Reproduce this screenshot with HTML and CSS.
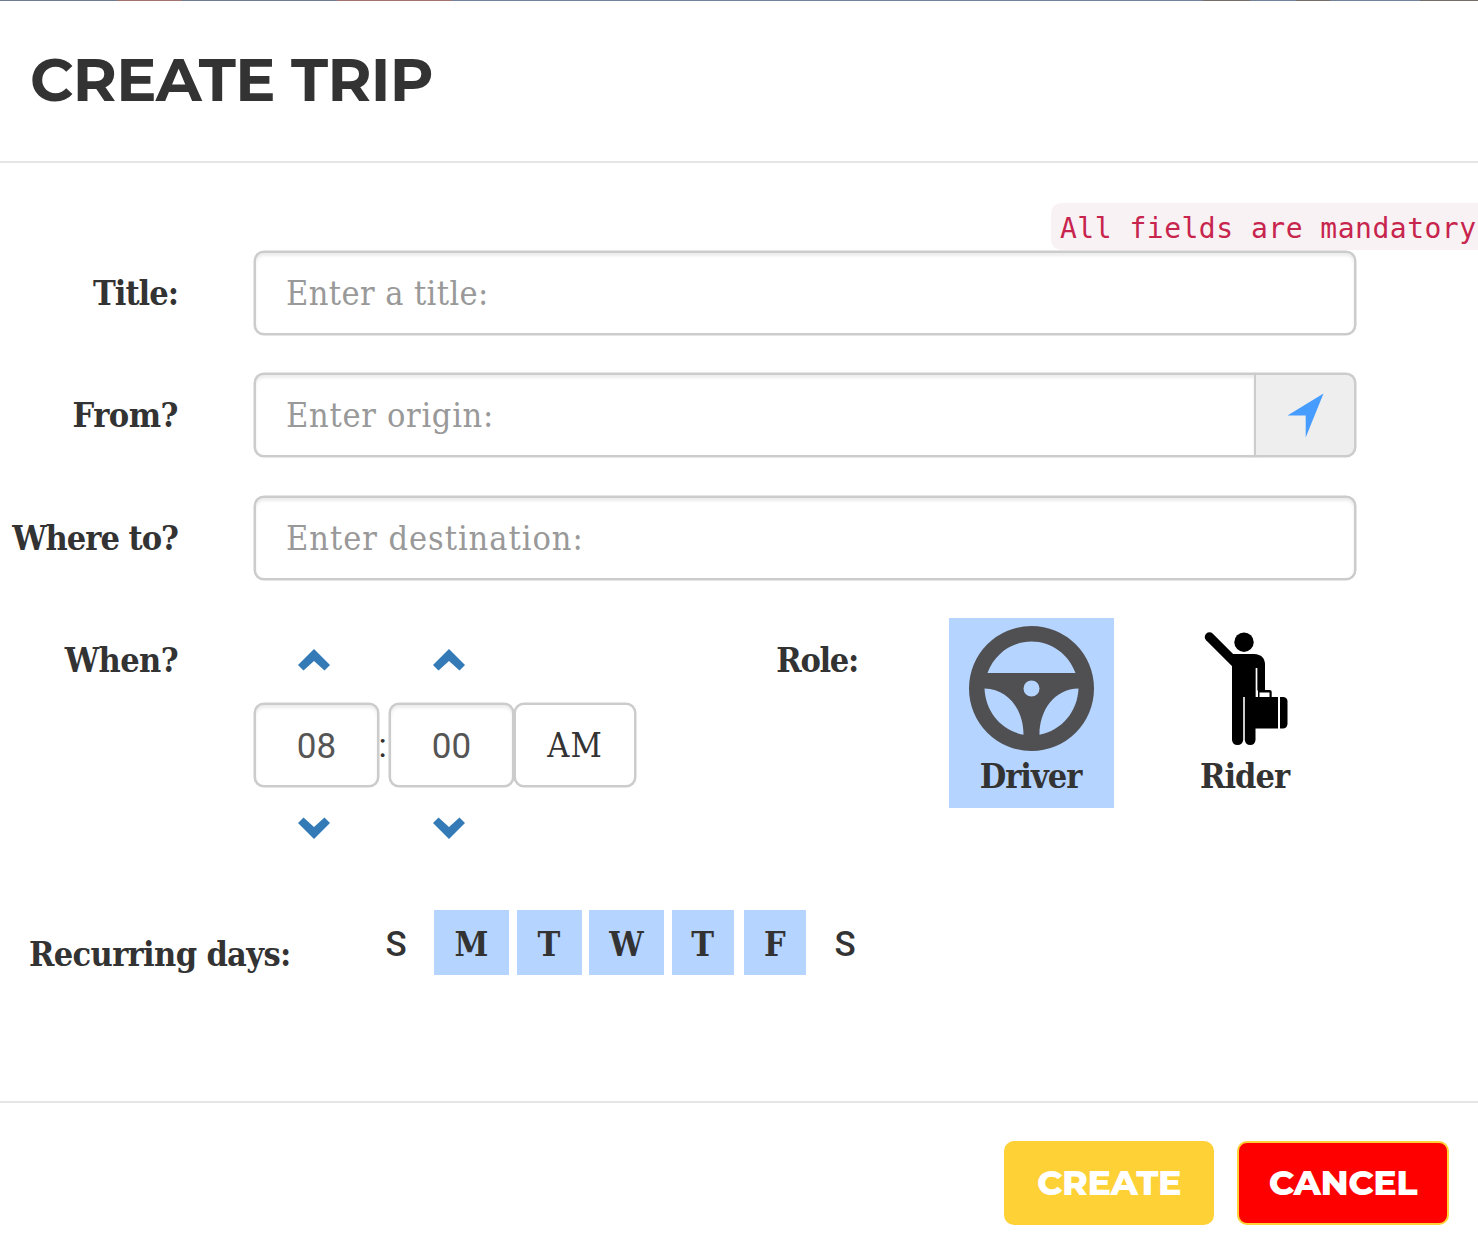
FILE: index.html
```html
<!DOCTYPE html>
<html lang="en">
<head>
<meta charset="utf-8">
<title>Create Trip</title>
<link rel="stylesheet" href="styles.css">
</head>
<body>
<div class="modal">
  <header class="modal-header"><h1 class="modal-title">CREATE TRIP</h1></header>
  <main class="modal-body">
    <div class="notice"><code class="notice-text">All fields are mandatory</code></div>
    <div class="row"><label class="label label-title">Title:</label><div class="input"><span class="ph-title">Enter a title:</span></div></div>
    <div class="row"><label class="label label-from">From?</label><div class="group"><div class="input input-joined"><span class="ph-origin">Enter origin:</span></div><button class="addon" aria-label="Use my location"><svg width="37" height="45" viewBox="0 0 37 45"><path d="M36.5 0.5L18.7 44.5V22.5H0.5Z" fill="#469cff"/></svg></button></div></div>
    <div class="row"><label class="label label-to">Where to?</label><div class="input"><span class="ph-dest">Enter destination:</span></div></div>
    <div class="row row-when">
      <label class="label label-when">When?</label>
      <div class="time">
        <svg class="chev" viewBox="0 0 32 22"><path d="M16 0L32 16L26.5 21.5L16 12L5.5 21.5L0 16Z"/></svg>
        <span></span>
        <svg class="chev" viewBox="0 0 32 22"><path d="M16 0L32 16L26.5 21.5L16 12L5.5 21.5L0 16Z"/></svg>
        <span></span>
        <div class="input time-input">08</div>
        <span class="colon">:</span>
        <div class="input time-input">00</div>
        <button class="ampm">AM</button>
        <svg class="chev" viewBox="0 0 32 22"><path d="M16 22L32 6L26.5 .5L16 10L5.5 .5L0 6Z"/></svg>
        <span></span>
        <svg class="chev" viewBox="0 0 32 22"><path d="M16 22L32 6L26.5 .5L16 10L5.5 .5L0 6Z"/></svg>
      </div>
      <label class="label label-role">Role:</label>
      <div class="role role-active">
        <svg width="125" height="125" viewBox="0 0 125 125"><path fill="#505052" fill-rule="evenodd" d="M62.5 0a62.5 62.5 0 1 1 0 125a62.5 62.5 0 1 1 0-125ZM18.5 47H106.5C99.500 28 82.500 15.500 62.500 15.500S25.500 28 18.500 47ZM62.500 54.500a8 8 0 1 0 0 16a8 8 0 1 0 0-16ZM15.500 62.500C16.500 86 32.500 104.500 54.500 108.700C54.500 84 39.500 63 15.500 62.500ZM109.500 62.500C108.500 86 92.500 104.500 70.500 108.700C70.500 84 85.500 63 109.500 62.500Z"/></svg>
        <span class="role-name">Driver</span>
      </div>
      <div class="role">
        <svg width="125" height="125" viewBox="0 0 125 125">
          <g transform="translate(21.500 6)">
            <circle cx="39.500" cy="10.200" r="9.700"/>
            <path d="M5 5L30 30" stroke="#000" stroke-width="9.500" stroke-linecap="round"/>
            <path d="M26.500 22H49.500Q60.500 22.500 60.500 33V58H65Q67.200 58 67.200 60V65H73.500V96.500H51V108Q50.500 113 45.700 113T40.300 108V65H38.700V108Q38 113 33 113T27.500 108V30Z"/>
            <path d="M75.500 65H79Q83 65.500 83 69.500V92Q82.500 96 79 96.500H75.500Z"/>
            <path d="M52 36V65" stroke="#fff" stroke-width="1.700"/>
            <rect x="55" y="60.500" width="10" height="4.500" fill="#fff"/>
            <path d="M53 65V58.500" stroke="#fff" stroke-width="1"/>
          </g>
        </svg>
        <span class="role-name">Rider</span>
      </div>
    </div>
    <div class="days-row">
      <label class="days-label">Recurring days:</label>
      <div class="days"><span class="day sans">S</span><span class="day on">M</span><span class="day on">T</span><span class="day on">W</span><span class="day on">T</span><span class="day on">F</span><span class="day sans">S</span></div>
    </div>
  </main>
  <footer class="modal-footer"><button class="btn btn-create">CREATE</button><button class="btn btn-cancel">CANCEL</button></footer>
</div>
</body>
</html>
```
FILE: styles.css
```css
* { box-sizing: border-box; }
html { background: #fff; }
body { margin: 0; overflow: hidden; color: #333; font: 34px/50px "Roboto Slab", "DejaVu Serif Condensed", "DejaVu Serif", serif; white-space: nowrap; }
button { padding: 0; font: inherit; color: inherit; }
svg { display: block; flex: none; }
.modal { width: 1478px; height: 1258px; padding-top: 1px; display: flex; flex-direction: column; overflow: hidden; background: linear-gradient(90deg, #6f7b90 117px, #a27370 117px 182px, #6f7b90 182px 337px, #a27370 337px 452px, #74819a 452px 1203px, #746e6a 1203px 1250px, #74819a 1250px 1296px, #746e6a 1296px 1330px, #74819a 1330px 1420px, #746e6a 1420px) 0 0 / 100% 1px no-repeat; }
.modal-header { flex: none; height: 162px; padding: 44px 0 0 30px; border-bottom: 2px solid #e5e5e5; }
.modal-title { margin: 0; font: 700 60px/70px Montserrat, Lato, sans-serif; letter-spacing: -.7px; }
.modal-body { flex: none; height: 938px; padding-top: 40px; display: flex; flex-direction: column; }
.notice { height: 47px; margin-bottom: 1px; display: flex; padding-left: 1051px; }
.notice-text { flex: 1; padding-left: 9px; border-radius: 10px 0 0 10px; background: #f9f2f4; color: #c7254e; font: 28px/51px Consolas, "DejaVu Sans Mono", monospace; letter-spacing: .5px; }
.row { display: grid; grid-template-columns: 178px 1102px; column-gap: 76px; height: 84px; margin-bottom: 38.4px; }
.label { font-weight: 700; line-height: 84px; text-align: right; letter-spacing: -1px; }
.label-from { letter-spacing: -.5px; }
.label-when { letter-spacing: -.6px; }
.label-role { letter-spacing: -1.3px; }
.ph-title { letter-spacing: .4px; }
.ph-origin { letter-spacing: .7px; }
.ph-dest { letter-spacing: .95px; }
.input { height: 84px; border: 2px solid #ccc; border-radius: 10px; background: #fff; box-shadow: inset 0 3px 3px rgba(0,0,0,.075), 0 0 0 .5px #ccc; padding-left: 30px; line-height: 80px; color: #999; }
.group { display: flex; }
.input-joined { width: 1002px; border-radius: 10px 0 0 10px; }
.addon { width: 100px; border: 2px solid #ccc; border-left: 0; border-radius: 0 10px 10px 0; background: #eee; box-shadow: 0 0 0 .5px #ccc; display: flex; align-items: center; justify-content: center; }
.row-when { height: 221px; margin: 0; grid-template-columns: 178px 458px 222px 256px 210px; column-gap: 0; }
.time { margin-left: 76px; width: 382px; display: grid; grid-template-columns: 125px 10px 125px 122px; grid-template-rows: 84px 85px 83px; align-items: center; }
.chev { width: 32px; height: 22px; margin: 0 0 1px 44px; fill: #337ab7; }
.time-input { padding: 2px 0 0; text-align: center; color: #555; font-family: Roboto, sans-serif; font-size: 35px; }
.colon { margin-left: -3px; text-align: center; font-family: Roboto, sans-serif; }
.ampm { height: 84px; border: 2px solid #ccc; border-radius: 10px; background: #fff; box-shadow: 0 0 0 .5px #ccc; letter-spacing: 1px; }
.role { margin-left: 91px; width: 165px; height: 190px; padding-top: 8px; display: flex; flex-direction: column; align-items: center; font-weight: 700; }
.role + .role { margin-left: 49px; }
.role-active { background: #b5d4ff; }
.role-name { margin-left: -2px; letter-spacing: -1px; }
.days-row { display: flex; height: 66px; margin-top: 71px; font-weight: 700; }
.days-label { width: 348px; padding: 19px 0 0 29px; letter-spacing: -.65px; }
.days { display: flex; gap: 7.5px; }
.day { width: 65px; height: 65px; line-height: 68px; text-align: center; }
.on { background: #b5d4ff; }
.day:nth-child(1) { width: 96px; margin-right: -17.500px; }
.day:nth-child(2), .day:nth-child(4) { width: 75px; }
.day:nth-child(5) { width: 62.500px; margin-right: 2px; }
.day:nth-child(6) { width: 62.500px; margin-right: -1px; }
.sans { font-family: Roboto, sans-serif; font-weight: 500; font-size: 35px; }
.day.sans { line-height: 70px; }
.modal-footer { flex: none; height: 157px; border-top: 2px solid #e5e5e5; display: flex; justify-content: flex-end; gap: 23px; padding: 38px 29px 0 0; }
.btn { height: 84px; border: 2px solid #fed136; border-radius: 10px; color: #fff; font: 800 35px/80px Montserrat, Lato, sans-serif; letter-spacing: -.5px; }
.btn-create { width: 210px; background: #fed136; }
.btn-cancel { width: 212px; background: red; }
```
